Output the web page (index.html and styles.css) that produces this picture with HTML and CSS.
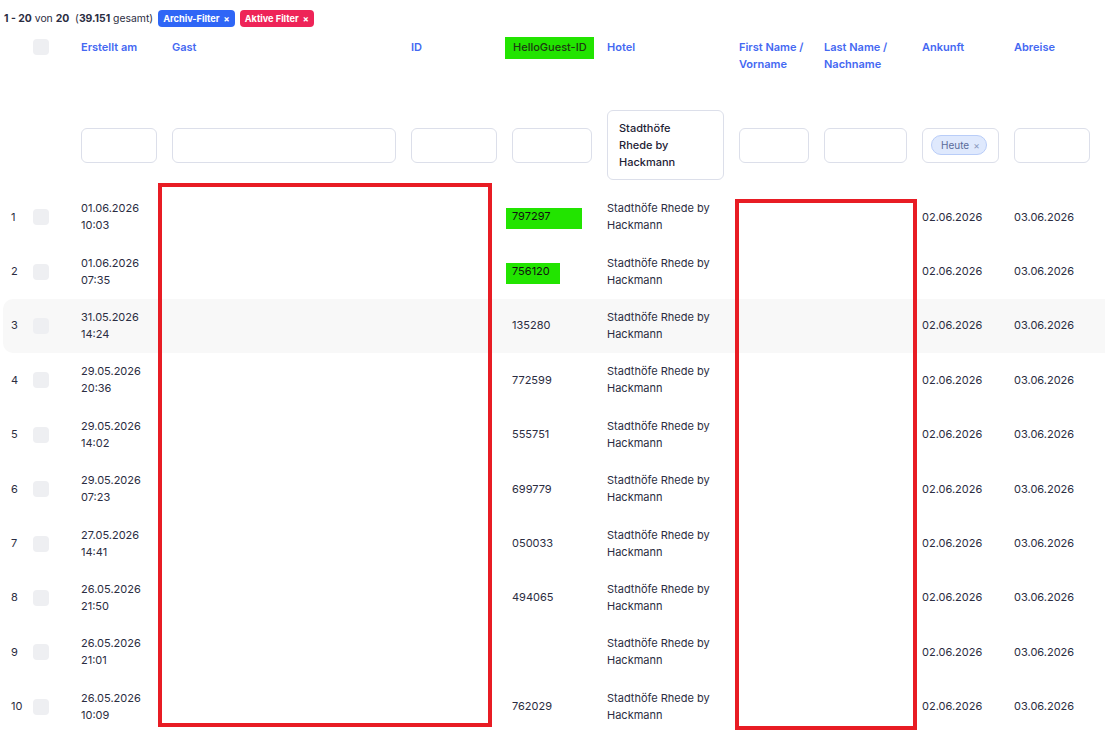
FILE: index.html
```html
<!DOCTYPE html>
<html lang="de">
<head>
  <meta charset="UTF-8" />
  <title>Gäste</title>
  <link rel="stylesheet" href="styles.css">
</head>
<body>
  <div class="summary">
    <span class="count"><b>1 - 20</b> von <b>20</b> &nbsp;(<b>39.151</b> gesamt)</span>
    <span class="badge blue">Archiv-Filter <i>×</i></span>
    <span class="badge pink">Aktive Filter <i>×</i></span>
  </div>

  <div class="table">
    <div class="row head">
      <div></div>
      <div><span class="check"></span></div>
      <div>Erstellt am</div>
      <div>Gast</div>
      <div>ID</div>
      <div><span class="mark-head">HelloGuest-ID</span></div>
      <div>Hotel</div>
      <div>First Name / Vorname</div>
      <div>Last Name / Nachname</div>
      <div>Ankunft</div>
      <div>Abreise</div>
    </div>

    <div class="row filters">
      <div></div>
      <div></div>
      <div><span class="input"></span></div>
      <div><span class="input"></span></div>
      <div><span class="input"></span></div>
      <div><span class="input"></span></div>
      <div><span class="select">Stadthöfe Rhede by Hackmann</span></div>
      <div><span class="input"></span></div>
      <div><span class="input"></span></div>
      <div><span class="input"><span class="chip">Heute <i>×</i></span></span></div>
      <div><span class="input"></span></div>
    </div>

    <div class="row">
      <div>1</div><div><span class="check"></span></div>
      <div>01.06.2026<br>10:03</div><div></div><div></div>
      <div><span class="mark mark-wide">797297</span></div>
      <div>Stadthöfe Rhede by Hackmann</div><div></div><div></div>
      <div>02.06.2026</div><div>03.06.2026</div>
    </div>
    <div class="row">
      <div>2</div><div><span class="check"></span></div>
      <div>01.06.2026<br>07:35</div><div></div><div></div>
      <div><span class="mark mark-short">756120</span></div>
      <div>Stadthöfe Rhede by Hackmann</div><div></div><div></div>
      <div>02.06.2026</div><div>03.06.2026</div>
    </div>
    <div class="row hover">
      <div>3</div><div><span class="check"></span></div>
      <div>31.05.2026<br>14:24</div><div></div><div></div>
      <div>135280</div>
      <div>Stadthöfe Rhede by Hackmann</div><div></div><div></div>
      <div>02.06.2026</div><div>03.06.2026</div>
    </div>
    <div class="row">
      <div>4</div><div><span class="check"></span></div>
      <div>29.05.2026<br>20:36</div><div></div><div></div>
      <div>772599</div>
      <div>Stadthöfe Rhede by Hackmann</div><div></div><div></div>
      <div>02.06.2026</div><div>03.06.2026</div>
    </div>
    <div class="row">
      <div>5</div><div><span class="check"></span></div>
      <div>29.05.2026<br>14:02</div><div></div><div></div>
      <div>555751</div>
      <div>Stadthöfe Rhede by Hackmann</div><div></div><div></div>
      <div>02.06.2026</div><div>03.06.2026</div>
    </div>
    <div class="row">
      <div>6</div><div><span class="check"></span></div>
      <div>29.05.2026<br>07:23</div><div></div><div></div>
      <div>699779</div>
      <div>Stadthöfe Rhede by Hackmann</div><div></div><div></div>
      <div>02.06.2026</div><div>03.06.2026</div>
    </div>
    <div class="row">
      <div>7</div><div><span class="check"></span></div>
      <div>27.05.2026<br>14:41</div><div></div><div></div>
      <div>050033</div>
      <div>Stadthöfe Rhede by Hackmann</div><div></div><div></div>
      <div>02.06.2026</div><div>03.06.2026</div>
    </div>
    <div class="row">
      <div>8</div><div><span class="check"></span></div>
      <div>26.05.2026<br>21:50</div><div></div><div></div>
      <div>494065</div>
      <div>Stadthöfe Rhede by Hackmann</div><div></div><div></div>
      <div>02.06.2026</div><div>03.06.2026</div>
    </div>
    <div class="row">
      <div>9</div><div><span class="check"></span></div>
      <div>26.05.2026<br>21:01</div><div></div><div></div>
      <div></div>
      <div>Stadthöfe Rhede by Hackmann</div><div></div><div></div>
      <div>02.06.2026</div><div>03.06.2026</div>
    </div>
    <div class="row">
      <div>10</div><div><span class="check"></span></div>
      <div>26.05.2026<br>10:09</div><div></div><div></div>
      <div>762029</div>
      <div>Stadthöfe Rhede by Hackmann</div><div></div><div></div>
      <div>02.06.2026</div><div>03.06.2026</div>
    </div>
  </div>

  <!-- redaction frames drawn over the table -->
  <div class="redact redact-guest"></div>
  <div class="redact redact-names"></div>
</body>
</html>
```

FILE: styles.css
```css
* {
  margin: 0;
  padding: 0;
  box-sizing: border-box;
}

body {
  font-family: Inter, "Noto Sans", sans-serif;
  font-size: 11px;
  line-height: 17px;
  color: #2b2d42;
  background: #fff;
  overflow: hidden;
  position: relative;
}

.summary {
  display: flex;
  align-items: flex-start;
  gap: 5px;
  height: 30px;
  padding: 10px 0 0 4px;
  color: #2b2d42;
}

.count {
  font-size: 10.4px;
  line-height: 17px;
}

.badge {
  display: inline-flex;
  align-items: center;
  gap: 4px;
  height: 17px;
  padding: 0 5px;
  border-radius: 4px;
  color: #fff;
  font-weight: 700;
  font-size: 9.2px;
}

.badge i {
  font-style: normal;
  font-size: 9px;
}

.blue { background: #2f66f6; }
.pink { background: #ee2458; }

.row {
  display: grid;
  grid-template-columns: 22px 48px 91px 239px 101px 95px 132px 85px 98px 92px 91px;
  align-items: center;
  margin-left: 3px;
  padding-left: 8px;
  height: 54.4px;
  border-radius: 10px 0 0 10px;
}

.row > div {
  padding-right: 15px;
}

.head {
  height: 70px;
  align-items: start;
  padding-top: 9px;
  color: #4468f2;
  font-weight: 600;
}

.filters {
  height: 90px;
}

.hover {
  background: #f8f8f8;
}

.check {
  display: block;
  width: 16px;
  height: 16px;
  border-radius: 4px;
  background: #eeeff2;
}

.mark-head {
  display: inline-block;
  width: 89px;
  height: 22px;
  margin: -2.5px 0 0 -7px;
  padding: 2.5px 0 0 8px;
  background: #22e400;
  color: #1d3a12;
  font-weight: 500;
}

.mark {
  display: inline-block;
  height: 21px;
  margin: 3px 0 0 -6px;
  padding: 0 0 0 6px;
  background: #22e400;
  color: #111;
}

.mark-wide { width: 76px; }
.mark-short { width: 54px; }

.input {
  display: flex;
  align-items: center;
  width: 100%;
  height: 35px;
  padding: 0 8px;
  border: 1px solid #dcdfea;
  border-radius: 6px;
  background: #fff;
}

.select {
  display: flex;
  align-items: center;
  width: 100%;
  height: 70px;
  padding: 0 30px 0 11px;
  border: 1px solid #dcdfea;
  border-radius: 6px;
  font-weight: 500;
  color: #1e2235;
}

.chip {
  display: inline-flex;
  align-items: center;
  gap: 4px;
  height: 20px;
  padding: 0 6px 0 9px;
  border: 1px solid #b9cdf8;
  border-radius: 10px;
  background: #dfe9fd;
  color: #5a6b9b;
  font-size: 10px;
}

.chip i {
  font-style: normal;
  color: #8a98bd;
}

.redact {
  position: absolute;
  border: 4px solid #e81c24;
}

.redact-guest {
  left: 158px;
  top: 183px;
  width: 334px;
  height: 544px;
}

.redact-names {
  left: 735px;
  top: 199px;
  width: 182px;
  height: 531px;
}
```
